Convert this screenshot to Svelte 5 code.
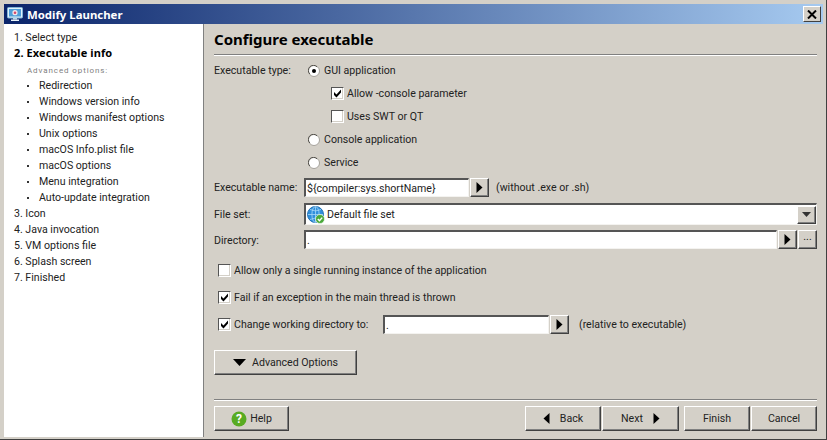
<script lang="ts">
	const advanced = [
		'Redirection',
		'Windows version info',
		'Windows manifest options',
		'Unix options',
		'macOS Info.plist file',
		'macOS options',
		'Menu integration',
		'Auto-update integration'
	];
	const laterSteps = ['3. Icon', '4. Java invocation', '5. VM options file', '6. Splash screen', '7. Finished'];
</script>

{#snippet checkbox(checked: boolean)}
	<span class="check">
		{#if checked}
			<svg width="9" height="9" viewBox="0 0 9 9"><path d="M1 3 L1 6 L3.5 8.5 L8 3.5 L8 0.5 L3.5 5.5 Z" fill="#000" /></svg>
		{/if}
	</span>
{/snippet}

{#snippet radio(checked: boolean)}
	<svg class="radio" width="12" height="12" viewBox="0 0 12 12">
		<circle cx="6" cy="6" r="5.5" fill="#fff" stroke="#a5a29b" />
		<path d="M1.8 9 A5 5 0 0 1 9 1.8" fill="none" stroke="#55534e" stroke-width="1" />
		{#if checked}<circle cx="6" cy="6" r="2" fill="#000" />{/if}
	</svg>
{/snippet}

{#snippet arrowRight()}
	<svg width="7" height="11" viewBox="0 0 7 11"><path d="M0.5 0 L6.5 5.5 L0.5 11 Z" fill="#000" /></svg>
{/snippet}

<div class="window">
	<header class="titlebar">
		<svg class="appicon" width="16" height="16" viewBox="0 0 16 16">
			<rect x="0.5" y="1.5" width="15" height="10.5" rx="1" fill="#dff1fb" stroke="#7fb4d6" />
			<rect x="2" y="3" width="12" height="7.5" fill="#4f9fd8" />
			<circle cx="8" cy="6.7" r="2.6" fill="#f1e6ea" />
			<circle cx="8" cy="6.7" r="1.3" fill="#d4486a" />
			<rect x="6" y="12" width="4" height="1.5" fill="#bcd7e8" />
			<rect x="4" y="13.5" width="8" height="1.5" fill="#e8f3fa" />
		</svg>
		<span class="title">Modify Launcher</span>
		<button class="close" aria-label="Close">
			<svg width="10" height="9" viewBox="0 0 10 9"><path d="M1 0.5 L9 8.5 M9 0.5 L1 8.5" stroke="#000" stroke-width="2" /></svg>
		</button>
	</header>

	<div class="body">
		<nav class="steps">
			<div class="step">1. Select type</div>
			<div class="step current">2. Executable info</div>
			<div class="adv-label">Advanced options:</div>
			{#each advanced as item}
				<div class="step sub"><span class="dot"></span>{item}</div>
			{/each}
			{#each laterSteps as step}
				<div class="step">{step}</div>
			{/each}
		</nav>

		<main class="content">
			<h2>Configure executable</h2>

			<div class="row type-row">
				<span class="label type-label">Executable type:</span>
				<label class="opt">{@render radio(true)}GUI application</label>
			</div>
			<div class="row sub-row"><label class="opt">{@render checkbox(true)}Allow -console parameter</label></div>
			<div class="row sub-row"><label class="opt">{@render checkbox(false)}Uses SWT or QT</label></div>
			<div class="row radio-row"><label class="opt">{@render radio(false)}Console application</label></div>
			<div class="row radio-row"><label class="opt">{@render radio(false)}Service</label></div>

			<div class="row name-row">
				<span class="label">Executable name:</span>
				<div class="field name-field">${'{'}compiler:sys.shortName{'}'}</div>
				<button class="btn square">{@render arrowRight()}</button>
				<span class="hint">(without .exe or .sh)</span>
			</div>

			<div class="row fileset-row">
				<span class="label">File set:</span>
				<div class="field combo">
					<svg class="globe" width="18" height="18" viewBox="0 0 18 18">
						<circle cx="8.5" cy="8.5" r="8" fill="#2f8fdc" stroke="#1e6fb5" />
						<path d="M1 8.5 H16 M8.5 1 V16 M3 3.5 Q8.5 6.5 14 3.5 M3 13.5 Q8.5 10.5 14 13.5" stroke="#a9d8f7" stroke-width="0.8" fill="none" />
						<ellipse cx="8.5" cy="8.5" rx="3.6" ry="8" stroke="#a9d8f7" stroke-width="0.8" fill="none" />
						<circle cx="13" cy="13" r="4.5" fill="#4aa93a" stroke="#fff" stroke-width="0.6" />
						<path d="M10.8 13 L12.5 14.8 L15.2 11.6" stroke="#fff" stroke-width="1.4" fill="none" />
					</svg>
					<span class="combo-text">Default file set</span>
					<button class="btn combo-btn" aria-label="Open">
						<svg width="9" height="5" viewBox="0 0 9 5"><path d="M0 0 H9 L4.5 5 Z" fill="#333" /></svg>
					</button>
				</div>
			</div>

			<div class="row dir-row">
				<span class="label dir-label">Directory:</span>
				<div class="field dir-field">.</div>
				<button class="btn square">{@render arrowRight()}</button>
				<button class="btn square dots">...</button>
			</div>

			<div class="row check-row first"><label class="opt">{@render checkbox(false)}Allow only a single running instance of the application</label></div>
			<div class="row check-row"><label class="opt">{@render checkbox(true)}Fail if an exception in the main thread is thrown</label></div>
			<div class="row check-row">
				<label class="opt work-label">{@render checkbox(true)}Change working directory to:</label>
				<div class="field work-field">.</div>
				<button class="btn square">{@render arrowRight()}</button>
				<span class="hint rel">(relative to executable)</span>
			</div>

			<div class="adv-row">
				<button class="btn advanced">
					<svg width="13" height="7" viewBox="0 0 13 7"><path d="M0 0 H13 L6.5 7 Z" fill="#000" /></svg>
					Advanced Options
				</button>
			</div>

			<footer class="footer">
				<button class="btn help">
					<svg width="16" height="16" viewBox="0 0 16 16">
						<circle cx="8" cy="8" r="7.5" fill="#58ab22" />
						<text x="8" y="12" text-anchor="middle" class="q">?</text>
					</svg>
					Help
				</button>
				<div class="spacer"></div>
				<button class="btn nav back">
					<svg width="7" height="11" viewBox="0 0 7 11"><path d="M6.5 0 L0.5 5.5 L6.5 11 Z" fill="#000" /></svg>
					Back
				</button>
				<button class="btn nav next">Next {@render arrowRight()}</button>
				<button class="btn nav finish">Finish</button>
				<button class="btn nav cancel">Cancel</button>
			</footer>
		</main>
	</div>
</div>

<style>
	:global(html), :global(body) {
		margin: 0;
		overflow: hidden;
	}

	.window {
		width: 827px;
		height: 440px;
		box-sizing: border-box;
		padding: 4px 3px 2px 4px;
		background: #d4d0c8;
		border-right: 1px solid #404040;
		border-bottom: 1px solid #404040;
		display: flex;
		flex-direction: column;
		font-family: Roboto, "Noto Sans", sans-serif;
		font-size: 10.6px;
		color: #222;
	}

	.titlebar {
		height: 20px;
		flex: none;
		display: flex;
		align-items: center;
		padding: 0 2px 0 3px;
		background: linear-gradient(to right, #0a246a, #a6caf0);
		color: #fff;
	}

	.appicon {
		margin-right: 4px;
	}

	.title {
		font-family: "Noto Sans", sans-serif;
		font-size: 11.4px;
		font-weight: bold;
	}

	.close {
		margin-left: auto;
		width: 18px;
		height: 16px;
		padding: 0;
		display: flex;
		align-items: center;
		justify-content: center;
		background: #d4d0c8;
		border: 1px solid;
		border-color: #fff #404040 #404040 #fff;
	}

	.body {
		flex: 1;
		display: flex;
		min-height: 0;
	}

	.steps {
		width: 200px;
		flex: none;
		box-sizing: border-box;
		background: #fff;
		padding: 6px 0 0 10px;
		border-right: 1px solid #808080;
	}

	.step {
		height: 16px;
		line-height: 16px;
		white-space: nowrap;
	}

	.step.current {
		font-family: "Noto Sans", sans-serif;
		font-size: 11px;
		font-weight: bold;
		line-height: 14px;
		letter-spacing: 0.1px;
		color: #000;
	}

	.step.sub {
		display: flex;
		align-items: center;
		padding-left: 13px;
	}

	.dot {
		width: 2px;
		height: 2px;
		background: #333;
		margin-right: 10px;
	}

	.adv-label {
		height: 16px;
		line-height: 17px;
		padding-left: 13px;
		font-size: 8px;
		letter-spacing: 0.9px;
		color: #808080;
	}

	.content {
		flex: 1;
		display: flex;
		flex-direction: column;
		padding: 0 6px 0 10px;
		min-width: 0;
	}

	h2 {
		margin: 0;
		height: 30px;
		line-height: 30px;
		font-family: "Noto Sans", sans-serif;
		font-size: 15px;
		font-weight: bold;
		color: #000;
		border-bottom: 1px solid #808080;
		box-shadow: 0 1px 0 #fff;
		box-sizing: content-box;
		flex: none;
	}

	.row {
		display: flex;
		align-items: center;
		flex: none;
		white-space: nowrap;
	}

	.label {
		width: 90px;
		flex: none;
	}

	.opt {
		display: flex;
		align-items: center;
	}

	.type-row {
		height: 23px;
		margin-top: 4px;
	}

	.type-label {
		width: 94px;
	}

	.type-row .radio {
		margin-right: 4px;
	}

	.sub-row {
		height: 23px;
		padding-left: 117px;
	}

	.radio-row {
		height: 23px;
		padding-left: 94px;
	}

	.radio-row .radio {
		margin-right: 4px;
	}

	.check {
		width: 13px;
		height: 13px;
		box-sizing: border-box;
		flex: none;
		display: flex;
		align-items: center;
		justify-content: center;
		background: #fff;
		border: 1px solid;
		border-color: #555 #fff #fff #555;
		box-shadow: inset -1px -1px 0 #d4d0c8;
		margin-right: 3px;
	}

	.field {
		box-sizing: border-box;
		background: #fff;
		border: 2px solid;
		border-color: #555 #f4f3f0 #f4f3f0 #555;
		border-width: 2px 1px 1px 2px;
		padding-left: 1px;
		display: flex;
		align-items: center;
		white-space: nowrap;
	}

	.name-row {
		height: 19px;
		margin-top: 4px;
	}

	.name-field {
		width: 165px;
		height: 19px;
	}

	.btn {
		box-sizing: border-box;
		margin: 0;
		padding: 0;
		font: inherit;
		color: #222;
		background: #d4d0c8;
		border: 1px solid;
		border-color: #fff #404040 #404040 #fff;
		box-shadow: inset -1px -1px 0 #808080;
		display: flex;
		align-items: center;
		justify-content: center;
	}

	.square {
		width: 19px;
		height: 19px;
		flex: none;
		margin-left: 1px;
	}

	.dots {
		align-items: flex-start;
		line-height: 11px;
	}

	.hint {
		margin-left: 7px;
	}

	.fileset-row {
		margin-top: 6px;
		height: 22px;
	}

	.combo {
		flex: 1;
		height: 22px;
		padding-left: 1px;
	}

	.globe {
		margin-right: 2px;
	}

	.combo-btn {
		margin-left: auto;
		width: 19px;
		height: 18px;
	}

	.dir-row {
		margin-top: 5px;
		height: 19px;
	}

	.dir-label {
		padding-top: 2px;
	}

	.dir-field {
		flex: 1;
		height: 19px;
		min-width: 0;
	}

	.check-row {
		height: 27px;
		padding-left: 4px;
	}

	.check-row.first {
		margin-top: 8px;
	}

	.work-label {
		width: 165px;
	}

	.work-field {
		width: 166px;
		height: 19px;
	}

	.rel {
		margin-left: 10px;
	}

	.adv-row {
		margin-top: 12px;
		flex: none;
	}

	.advanced {
		width: 143px;
		height: 25px;
		gap: 6px;
	}

	.footer {
		margin-top: auto;
		margin-bottom: 6px;
		padding-top: 6px;
		border-top: 1px solid #808080;
		box-shadow: inset 0 1px 0 #fff;
		display: flex;
		flex: none;
	}

	.help {
		width: 75px;
		height: 25px;
		gap: 3px;
	}

	.q {
		fill: #fff;
		font-size: 12px;
		font-weight: bold;
	}

	.spacer {
		flex: 1;
	}

	.nav {
		height: 25px;
		gap: 10px;
		margin-left: 1px;
	}

	.back {
		width: 76px;
	}

	.next {
		width: 77px;
	}

	.finish {
		width: 66px;
		margin-left: 5px;
	}

	.cancel {
		width: 66px;
	}
</style>
